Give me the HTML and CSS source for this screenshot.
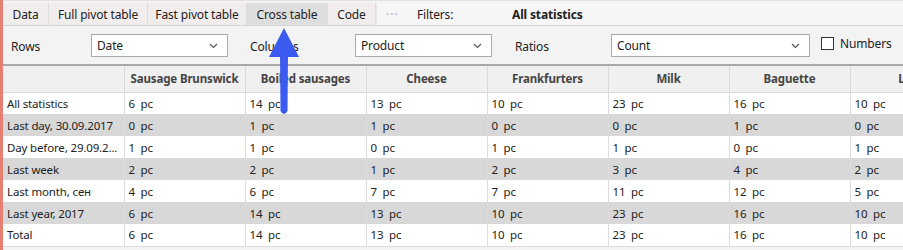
FILE: index.html
```html
<!DOCTYPE html>
<html lang="en">
<head>
    <meta charset="UTF-8">
    <title>Cross table</title>
    <link rel="stylesheet" href="styles.css">
</head>
<body>
    <div class="window">
        <div class="tab-bar">
            <div class="tab">Data</div>
            <div class="tab">Full pivot table</div>
            <div class="tab">Fast pivot table</div>
            <div class="tab active">Cross table</div>
            <div class="tab">Code</div>
            <div class="filter-bar">
                <span class="dots">&middot;&middot;&middot;</span>
                <span class="filter-label">Filters:</span>
                <span class="filter-value">All statistics</span>
            </div>
        </div>

        <div class="options">
            <span class="opt-label rows-label">Rows</span>
            <div class="select select-short">Date<svg class="chevron" width="9" height="6" viewBox="0 0 9 6"><path d="M1 1 L4.5 4.5 L8 1" fill="none" stroke="#555" stroke-width="1.2"/></svg></div>
            <span class="opt-label cols-label">Columns</span>
            <div class="select select-short">Product<svg class="chevron" width="9" height="6" viewBox="0 0 9 6"><path d="M1 1 L4.5 4.5 L8 1" fill="none" stroke="#555" stroke-width="1.2"/></svg></div>
            <span class="opt-label ratios-label">Ratios</span>
            <div class="select select-long">Count<svg class="chevron" width="9" height="6" viewBox="0 0 9 6"><path d="M1 1 L4.5 4.5 L8 1" fill="none" stroke="#555" stroke-width="1.2"/></svg></div>
            <label class="check"><span class="box"></span>Numbers</label>
        </div>

        <div class="table-wrap">
            <table class="cross">
                <colgroup>
                    <col class="col-first">
                    <col><col><col><col><col><col><col>
                </colgroup>
                <thead>
                    <tr>
                        <th></th>
                        <th>Sausage Brunswick</th>
                        <th>Boiled sausages</th>
                        <th>Cheese</th>
                        <th>Frankfurters</th>
                        <th>Milk</th>
                        <th>Baguette</th>
                        <th>Loaf</th>
                    </tr>
                </thead>
                <tbody>
                    <tr><td>All statistics</td><td>6 &nbsp;pc</td><td>14 &nbsp;pc</td><td>13 &nbsp;pc</td><td>10 &nbsp;pc</td><td>23 &nbsp;pc</td><td>16 &nbsp;pc</td><td>10 &nbsp;pc</td></tr>
                    <tr class="alt"><td>Last day, 30.09.2017</td><td>0 &nbsp;pc</td><td>1 &nbsp;pc</td><td>1 &nbsp;pc</td><td>0 &nbsp;pc</td><td>0 &nbsp;pc</td><td>1 &nbsp;pc</td><td>0 &nbsp;pc</td></tr>
                    <tr><td>Day before, 29.09.2...</td><td>1 &nbsp;pc</td><td>1 &nbsp;pc</td><td>0 &nbsp;pc</td><td>1 &nbsp;pc</td><td>1 &nbsp;pc</td><td>0 &nbsp;pc</td><td>1 &nbsp;pc</td></tr>
                    <tr class="alt"><td>Last week</td><td>2 &nbsp;pc</td><td>2 &nbsp;pc</td><td>1 &nbsp;pc</td><td>2 &nbsp;pc</td><td>3 &nbsp;pc</td><td>4 &nbsp;pc</td><td>2 &nbsp;pc</td></tr>
                    <tr><td>Last month, сен</td><td>4 &nbsp;pc</td><td>6 &nbsp;pc</td><td>7 &nbsp;pc</td><td>7 &nbsp;pc</td><td>11 &nbsp;pc</td><td>12 &nbsp;pc</td><td>5 &nbsp;pc</td></tr>
                    <tr class="alt"><td>Last year, 2017</td><td>6 &nbsp;pc</td><td>14 &nbsp;pc</td><td>13 &nbsp;pc</td><td>10 &nbsp;pc</td><td>23 &nbsp;pc</td><td>16 &nbsp;pc</td><td>10 &nbsp;pc</td></tr>
                    <tr><td>Total</td><td>6 &nbsp;pc</td><td>14 &nbsp;pc</td><td>13 &nbsp;pc</td><td>10 &nbsp;pc</td><td>23 &nbsp;pc</td><td>16 &nbsp;pc</td><td>10 &nbsp;pc</td></tr>
                </tbody>
            </table>
        </div>

        <!-- pointer arrow drawn over the screenshot -->
        <svg class="arrow" width="40" height="92" viewBox="0 0 40 92">
            <path d="M20 1 L35 30 L5 30 Z" fill="#3b5bf0"/>
            <path d="M16 28 L24 28 L23.5 84 Q20 90 16.5 84 Z" fill="#3b5bf0"/>
        </svg>
    </div>
</body>
</html>
```

FILE: styles.css
```css
* {
    margin: 0;
    padding: 0;
    box-sizing: border-box;
}

body {
    font-family: 'Segoe UI', 'Noto Sans', sans-serif;
    font-size: 11.5px;
    letter-spacing: -0.15px;
    color: #222;
    background: #fff;
    width: 903px;
    height: 250px;
    overflow: hidden;
}

.window {
    position: relative;
    height: 250px;
    border-left: 3px solid #e47f72;
    background: #f3f3f3;
    overflow: hidden;
}

/* tabs */
.tab-bar {
    display: grid;
    grid-template-columns: 46px 99px 99px 81px 48px 1fr;
    height: 26px;
    padding-top: 2px;
    border-top: 1px solid #e2e2e2;
    border-bottom: 1px solid #d4d4d4;
    background: #f3f3f3;
}

.tab {
    display: flex;
    align-items: center;
    justify-content: center;
    background: #f2eded;
    border-right: 1px solid #dcdcdc;
    color: #222;
    white-space: nowrap;
    font-size: 12px;
}

.tab.active {
    background: #dedede;
}

.filter-bar {
    display: flex;
    align-items: center;
    padding-left: 9px;
    background: #f6f6f6;
    border-left: 1px solid #e6e6e6;
    font-size: 12px;
}

.dots {
    color: #aaa;
    letter-spacing: 1px;
    width: 31px;
}

.filter-label {
    width: 95px;
}

.filter-value {
    font-weight: bold;
}

/* options row */
.options {
    display: flex;
    align-items: center;
    height: 40px;
    padding-left: 8px;
    background: #f3f3f3;
    border-bottom: 2px solid #a8a8a8;
    font-size: 12px;
}

.opt-label {
    padding-top: 2px;
}

.rows-label {
    width: 80px;
}

.cols-label {
    width: 105px;
    margin-left: 22px;
}

.ratios-label {
    width: 96px;
    margin-left: 23px;
}

.select {
    display: flex;
    align-items: center;
    justify-content: space-between;
    height: 23px;
    padding: 0 9px 0 5px;
    background: #fff;
    border: 1px solid #a9a9a9;
    margin-top: 1px;
}

.select-short {
    width: 137px;
}

.select-long {
    width: 199px;
}

.chevron {
    margin-top: 1px;
}

.check {
    display: flex;
    align-items: center;
    gap: 6px;
    margin-left: 11px;
    margin-bottom: 4px;
}

.box {
    width: 13px;
    height: 13px;
    border: 1px solid #333;
    background: #fff;
}

/* table */
.table-wrap {
    overflow: hidden;
    background: #fff;
}

.cross {
    table-layout: fixed;
    border-collapse: collapse;
    width: 968px;
}

.cross col {
    width: 121px;
}

.cross th {
    height: 26px;
    background: #f0f0f0;
    color: #444;
    font-weight: bold;
    text-align: center;
    border-right: 1px solid #dadada;
    border-bottom: 1px solid #dadada;
    white-space: nowrap;
    overflow: hidden;
}

.cross td {
    height: 22px;
    padding: 0 5px 0 4px;
    border-right: 1px solid #dcdcdc;
    white-space: nowrap;
    overflow: hidden;
}

.cross tr.alt td {
    background: #d8d8d8;
}

.cross tbody tr:last-child td {
    border-bottom: 1px solid #dcdcdc;
}

.arrow {
    position: absolute;
    left: 261px;
    top: 27px;
}
```
